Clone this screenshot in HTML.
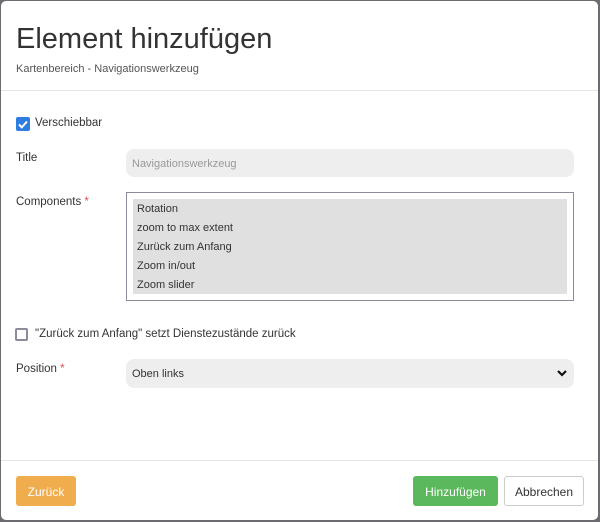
<!DOCTYPE html>
<html><head><meta charset="utf-8"><style>
*{box-sizing:border-box;margin:0;padding:0}
body{width:600px;height:522px;background:#6b6b70;font-family:"Liberation Sans",sans-serif;color:#333;position:relative;overflow:hidden}
.m{position:absolute;left:1px;top:1px;width:597px;height:519px;background:#fff;border-radius:5px}
.a{position:absolute}
h1{position:absolute;left:15px;top:22px;font-size:29px;font-weight:normal;color:#333}
.sub{left:15px;top:62px;font-size:11px;color:#555}
.hr{left:0;width:597px;height:1px;background:#e5e5e5}
.lbl{font-size:11.5px;color:#333}
.st{color:#d9534f}
.inp{left:125px;top:148px;width:448px;height:28px;background:#eee;border-radius:8px;font-size:11px;color:#999;padding:9px 6px}
.lb{left:125px;top:191px;width:448px;height:109px;border:1px solid #8e8a9a;}
.opt{position:absolute;left:6px;width:434px;height:19px;background:#e0e0e0;font-size:11px;padding:4px 4px 0;color:#333}
.sel{left:125px;top:358px;width:448px;height:29px;background:#eee;border-radius:8px;font-size:11px;padding:9px 6px}
.btn{font-size:12px;border-radius:3px;height:30px;padding:9px 0;text-align:center}
</style></head><body>
<div class="m">
<h1>Element hinzufügen</h1>
<div class="a sub">Kartenbereich - Navigationswerkzeug</div>
<div class="a hr" style="top:89px"></div>
<div class="a" style="left:15px;top:116px;width:14px;height:14px;background:#2f7de1;border-radius:2px"><svg width="14" height="14"><path d="M3 7.5l2.8 2.8L11 4.5" stroke="#fff" stroke-width="2" fill="none"/></svg></div>
<div class="a lbl" style="left:34px;top:116px">Verschiebbar</div>
<div class="a lbl" style="left:15px;top:151px">Title</div>
<div class="a inp">Navigationswerkzeug</div>
<div class="a lbl" style="left:15px;top:195px">Components <span class="st">*</span></div>
<div class="a lb">
<div class="opt" style="top:6px">Rotation</div>
<div class="opt" style="top:25px">zoom to max extent</div>
<div class="opt" style="top:44px">Zurück zum Anfang</div>
<div class="opt" style="top:63px">Zoom in/out</div>
<div class="opt" style="top:82px">Zoom slider</div>
</div>
<div class="a" style="left:14px;top:327px;width:13px;height:13px;border:2px solid #8e8a9a;border-radius:2px"></div>
<div class="a lbl" style="left:34px;top:327px">"Zurück zum Anfang" setzt Dienstezustände zurück</div>
<div class="a lbl" style="left:15px;top:362px">Position <span class="st">*</span></div>
<div class="a sel">Oben links<svg style="position:absolute;right:7px;top:10px" width="10" height="8"><path d="M1 2l4 4 4-4" stroke="#111" stroke-width="2.2" fill="none"/></svg></div>
<div class="a hr" style="top:459px"></div>
<div class="a btn" style="left:15px;top:475px;width:60px;background:#f0ad4e;color:#fff">Zurück</div>
<div class="a btn" style="left:412px;top:475px;width:85px;background:#5cb85c;color:#fff">Hinzufügen</div>
<div class="a btn" style="left:503px;top:475px;width:80px;border:1px solid #ccc;color:#333;padding-top:8px">Abbrechen</div>
</div>
</body></html>
